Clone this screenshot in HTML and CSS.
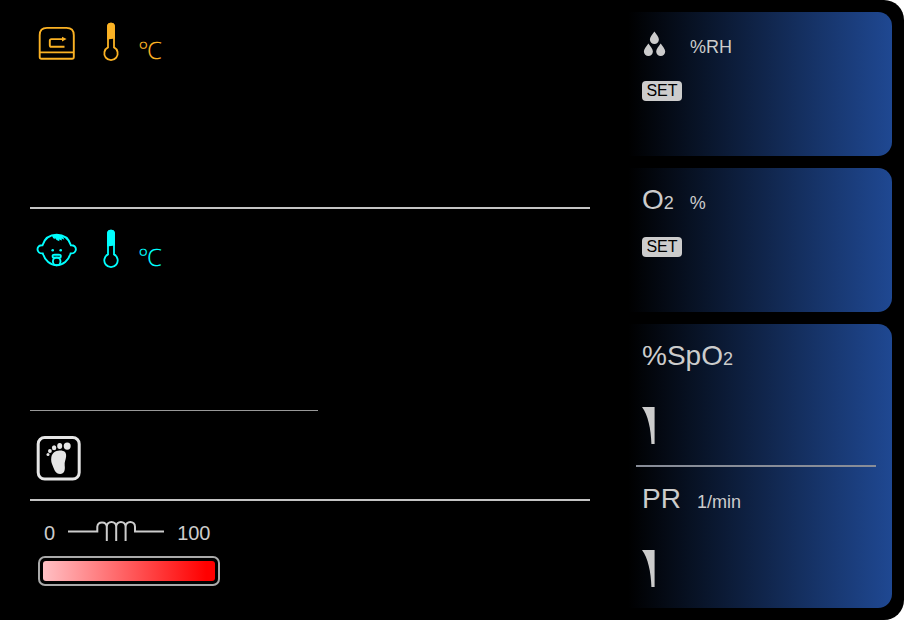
FILE: index.html
```html
<!DOCTYPE html>
<html lang="en">
<head>
<meta charset="utf-8">
<meta name="viewport" content="width=device-width, initial-scale=1">
<title>Incubator monitor</title>
<link rel="stylesheet" href="styles.css">
</head>
<body>
<svg class="defs" aria-hidden="true">
  <symbol id="thermometer" viewBox="100 20 22 44">
    <path d="M108 26.7a3 3 0 0 1 6 0V47.4a6.7 6.7 0 1 1-6 0Z" fill="none" stroke="currentColor" stroke-width="1.8"/>
    <path d="M107.1 26.7a3.9 3.9 0 0 1 7.8 0V38.5L107.1 39.5Z" fill="currentColor"/>
  </symbol>
  <symbol id="wedge" viewBox="0 0 13 37">
    <path d="M0 0H12.6V37H9.4C9 22 6 8 0 0Z" fill="currentColor"/>
  </symbol>
</svg>
<div class="monitor">
  <main class="readings">
    <section class="zone air">
      <div class="zone-head">
        <svg class="icon" viewBox="36 20 42 44" role="img" aria-label="Air">
          <g fill="none" stroke="currentColor" stroke-width="1.9">
            <path d="M39.7 35.2Q39.7 27.9 47 27.9H66.5Q73.8 27.9 73.8 35.2V57Q73.8 58.8 72 58.8H41.5Q39.7 58.8 39.7 57Z"/>
            <path d="M39.7 52.4H73.8"/>
            <path d="M64.5 46.8H51.4Q49.8 46.8 49.8 45.2V40.7Q49.8 39.1 51.4 39.1H63"/>
          </g>
          <path d="M62 36.7L66.6 39.1L62 41.5Z" fill="currentColor"/>
        </svg>
        <svg class="thermometer" aria-hidden="true"><use href="#thermometer"/></svg>
        <span class="degree">℃</span>
      </div>
    </section>
    <section class="zone skin">
      <div class="zone-head">
        <svg class="icon" viewBox="36 227 42 44" role="img" aria-label="Skin">
          <g fill="none" stroke="currentColor" stroke-width="1.9">
            <path d="M42.5 245.2C44.7 238.5 50 234.8 56.7 234.8S68.7 238.5 70.9 245.2C74 245 75.9 246.8 75.9 249.3C75.9 251.8 74 253.6 70.6 253.4C68.5 260.5 63 265.2 56.7 265.2S44.9 260.5 42.8 253.4C39.4 253.6 37.5 251.8 37.5 249.3C37.5 246.8 39.4 245 42.5 245.2Z"/>
            <path d="M53.2 258.2C51.4 254 53.6 254.8 56.7 254.8S62 254 60.2 258.2"/>
            <circle cx="56.7" cy="261.4" r="3.8"/>
            <path d="M53 257.6H60.4"/>
          </g>
          <path d="M51.8 235.5Q56.5 233.8 61.2 235.6Q64 237.1 64.3 239.8L61.6 238.5L62 240.4L59 239.6L59.5 241.2Q56 240.6 54.8 237.8L54.7 239.3Q52.8 238.2 51.8 235.5Z" fill="currentColor"/>
          <circle cx="52.7" cy="250.2" r="1.3" fill="currentColor"/>
          <circle cx="60.7" cy="250.2" r="1.3" fill="currentColor"/>
        </svg>
        <svg class="thermometer" aria-hidden="true"><use href="#thermometer"/></svg>
        <span class="degree">℃</span>
      </div>
      <hr class="half-rule">
    </section>
    <section class="zone weight">
      <svg class="foot" viewBox="36 436 46 46" role="img" aria-label="Weight">
        <rect x="38.2" y="437.5" width="41" height="41.6" rx="6.5" fill="none" stroke="currentColor" stroke-width="3"/>
        <g fill="currentColor">
          <path d="M51.3 457.5C52 453 55.5 450.8 59.5 450.6C64.4 450.4 66.5 452.5 66.1 456.5C65.7 460 64.3 462 64.7 465.5C65.3 470 64.3 474 60.2 474C55.2 474 54.3 469.5 52.7 465.8C51.6 463.2 50.8 460.8 51.3 457.5Z"/>
          <ellipse cx="67.2" cy="446.1" rx="3.5" ry="3.6"/>
          <ellipse cx="59.7" cy="446.1" rx="2.5" ry="3"/>
          <ellipse cx="54.1" cy="447.8" rx="2.2" ry="2.5"/>
          <ellipse cx="49.9" cy="451" rx="1.9" ry="2.1"/>
          <circle cx="48" cy="454.5" r="1.5"/>
        </g>
      </svg>
    </section>
    <section class="zone heater">
      <div class="scale">
        <span>0</span>
        <svg class="coil" viewBox="68 520 96 27" aria-hidden="true">
          <path d="M68 531.6H97.3V526.7A4.8 4.8 0 0 1 106.8 526.7A4.7 4.8 0 0 1 116.2 526.7A4.7 4.8 0 0 1 125.6 526.7A4.7 4.8 0 0 1 135 526.7V531.6H164M106.8 526V541M116.2 526V541M125.6 526V541" fill="none" stroke="currentColor" stroke-width="2"/>
        </svg>
        <span>100</span>
      </div>
      <div class="gauge" role="img" aria-label="Heater power"><div class="gauge-fill"></div></div>
    </section>
  </main>
  <aside class="panels">
    <section class="panel">
      <div class="reading">
        <div class="reading-head">
          <span class="name"><svg class="drops" viewBox="642 30 32 30" role="img" aria-label="Humidity">
            <g fill="currentColor">
              <path id="drop" d="M654.4 32.5C656.6 35.7 658.9 38.2 658.9 40.6A4.5 4.3 0 0 1 649.9 40.6C649.9 38.2 652.2 35.7 654.4 32.5Z"/>
              <use href="#drop" x="-6" y="12"/>
              <use href="#drop" x="6.3" y="12"/>
            </g>
          </svg></span>
          <span class="unit">%RH</span>
        </div>
        <span class="set">SET</span>
      </div>
    </section>
    <section class="panel">
      <div class="reading">
        <div class="reading-head">
          <span class="name">O<span class="low">2</span></span>
          <span class="unit">%</span>
        </div>
        <span class="set">SET</span>
      </div>
    </section>
    <section class="panel">
      <div class="reading">
        <div class="reading-head">
          <span class="name">%SpO<span class="low">2</span></span>
        </div>
        <svg class="wedge" aria-hidden="true"><use href="#wedge"/></svg>
      </div>
      <hr class="panel-rule">
      <div class="reading">
        <div class="reading-head">
          <span class="name">PR</span>
          <span class="unit">1/min</span>
        </div>
        <svg class="wedge" aria-hidden="true"><use href="#wedge"/></svg>
      </div>
    </section>
  </aside>
</div>
</body>
</html>
```
FILE: styles.css
```css
* {
  box-sizing: border-box;
}

body {
  margin: 0;
  background: #fff;
  color: #ccc;
  font-family: "Liberation Sans", Arial, sans-serif;
}

svg {
  display: block;
  flex: none;
}

hr {
  margin: 0;
  border: 0;
}

.defs {
  position: absolute;
  width: 0;
  height: 0;
}

.monitor {
  display: grid;
  grid-template-columns: 1fr 272px;
  min-height: 100vh;
  padding-right: 12px;
  border-radius: 0 20px 20px 0;
  background: #000;
}

.readings {
  display: grid;
  grid-template-rows: 209fr 202fr 90fr 119fr;
  padding: 0 30px;
}

.zone {
  display: flex;
  flex-direction: column;
}

.air,
.weight {
  border-bottom: 2px solid #c4c4c4;
}

.air {
  padding-top: 20px;
  color: #fbb224;
}

.skin {
  justify-content: space-between;
  padding-top: 18px;
  color: #00ffff;
}

.zone-head {
  display: flex;
  align-items: center;
  padding-left: 6px;
}

.icon {
  width: 42px;
  height: 44px;
  margin-right: 22px;
}

.thermometer {
  width: 22px;
  height: 44px;
  margin-right: 16px;
}

.degree {
  padding-top: 16px;
  font-family: "Noto Sans", "Open Sans", sans-serif;
  font-size: 24px;
  font-weight: 300;
  line-height: 28px;
}

.half-rule {
  width: 288px;
  height: 1px;
  background: #999;
}

.weight {
  padding-top: 25px;
  color: #e6e6e6;
}

.foot {
  width: 46px;
  height: 46px;
  margin-left: 6px;
}

.heater {
  padding: 19px 8px 0;
}

.scale {
  display: flex;
  align-items: center;
  gap: 13px;
  height: 27px;
  padding-left: 6px;
  font-size: 20px;
}

.coil {
  width: 96px;
  height: 27px;
}

.gauge {
  width: 182px;
  height: 30px;
  margin-top: 9px;
  padding: 3px;
  border: 2px solid #aaa;
  border-radius: 7px;
}

.gauge-fill {
  height: 100%;
  border-radius: 3px;
  background: linear-gradient(90deg, #ffc0c4, #f00 95%);
}

.panels {
  display: grid;
  grid-template-rows: 144fr 144fr 284fr;
  gap: 12px;
  padding: 12px 0;
}

.panel {
  display: flex;
  flex-direction: column;
  border-radius: 0 14px 14px 0;
  background: linear-gradient(90deg, #000 3%, #1f4892);
}

.reading {
  display: flex;
  flex: 1;
  flex-direction: column;
  align-items: flex-start;
  padding: 16px 16px 0 22px;
}

.reading-head {
  display: flex;
  align-items: baseline;
  gap: 16px;
  height: 32px;
}

.name {
  font-size: 28px;
  line-height: 32px;
}

.unit,
.low {
  font-size: 18px;
  line-height: 24px;
}

.drops {
  display: inline-block;
  width: 32px;
  height: 30px;
  vertical-align: -6px;
}

.set {
  width: 40px;
  margin-top: 21px;
  border-radius: 4px;
  background: #ccc;
  color: #000;
  font-size: 16px;
  line-height: 20px;
  text-align: center;
}

.wedge {
  width: 13px;
  height: 37px;
  margin-top: 35px;
}

.panel-rule {
  height: 2px;
  margin: 0 16px;
  background: #888d98;
}
```
